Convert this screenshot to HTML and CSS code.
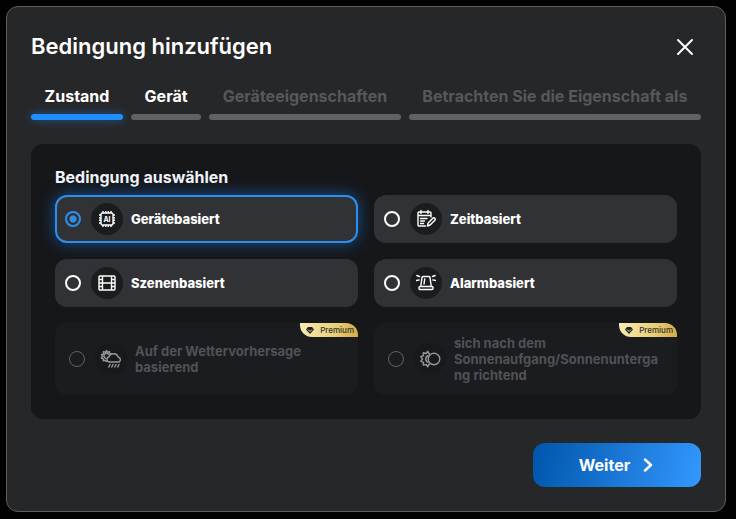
FILE: index.html
```html
<!DOCTYPE html>
<html lang="de">

<head>
    <meta charset="UTF-8">
    <meta name="viewport" content="width=device-width, initial-scale=1.0">
    <title>Bedingung hinzufügen</title>
    <link rel="stylesheet" href="styles.css">
</head>

<body>
    <form class="modal">
        <header class="modal-header">
            <h1>Bedingung hinzufügen</h1>
            <button type="button" class="close" aria-label="Schließen">
                <svg width="18" height="18" viewBox="0 0 18 18" fill="none" stroke="#fff" stroke-width="2" stroke-linecap="round">
                    <path d="M2 2l14 14M16 2L2 16" />
                </svg>
            </button>
        </header>

        <nav class="steps">
            <button type="button" class="step active">Zustand</button>
            <button type="button" class="step next">Gerät</button>
            <button type="button" class="step" disabled>Geräteeigenschaften</button>
            <button type="button" class="step" disabled>Betrachten Sie die Eigenschaft als</button>
        </nav>

        <fieldset class="panel">
            <legend>Bedingung auswählen</legend>
            <div class="options">
                <label class="option">
                    <input type="radio" name="condition" checked>
                    <span class="icon">
                        <svg width="20" height="20" viewBox="0 0 20 20" fill="none" stroke="#fff" stroke-width="1.4">
                            <rect x="4" y="4" width="12" height="12" rx="1.5" />
                            <path d="M6 4V2M8.700 4V2M11.300 4V2M14 4V2M6 18v-2M8.700 18v-2M11.300 18v-2M14 18v-2M4 6H2M4 8.700H2M4 11.300H2M4 14H2M18 6h-2M18 8.700h-2M18 11.300h-2M18 14h-2" />
                            <text class="chip-text" x="10" y="12.500" text-anchor="middle">AI</text>
                        </svg>
                    </span>
                    <span class="name">Gerätebasiert</span>
                </label>

                <label class="option">
                    <input type="radio" name="condition">
                    <span class="icon">
                        <svg width="20" height="20" viewBox="0 0 20 20" fill="none" stroke="#fff" stroke-width="1.400" stroke-linecap="round" stroke-linejoin="round">
                            <path d="M9.500 17H3a1 1 0 0 1-1-1V4a1 1 0 0 1 1-1h11a1 1 0 0 1 1 1v4M2 6.500H15M5 1.500v3M12 1.500v3M4.500 9.500h6.500M4.500 12h4M4.500 14.500h3" />
                            <path d="M11.500 17l.6-3 5-5a1.500 1.500 0 0 1 2 2l-5 5z" />
                        </svg>
                    </span>
                    <span class="name">Zeitbasiert</span>
                </label>

                <label class="option">
                    <input type="radio" name="condition">
                    <span class="icon">
                        <svg width="20" height="20" viewBox="0 0 20 20" fill="none" stroke="#fff" stroke-width="1.400">
                            <rect x="2" y="3" width="16" height="14" rx="1" />
                            <path d="M5.500 3v14M14.500 3v14M5.500 10h9M2 6.500h3.500M2 10h3.500M2 13.500h3.500M14.500 6.500H18M14.500 10H18M14.500 13.500H18" />
                        </svg>
                    </span>
                    <span class="name">Szenenbasiert</span>
                </label>

                <label class="option">
                    <input type="radio" name="condition">
                    <span class="icon">
                        <svg width="20" height="20" viewBox="0 0 20 20" fill="none" stroke="#fff" stroke-width="1.400" stroke-linecap="round" stroke-linejoin="round">
                            <path d="M4.800 13L6 4.700a1.200 1.200 0 0 1 1.200-1.200h5.600a1.200 1.200 0 0 1 1.200 1.200L15.200 13M8 11l.7-5" />
                            <rect x="3" y="13.500" width="14" height="3" rx="1" />
                            <path d="M.8 2.500l2.700 1M.5 7.500l2.700-.6M19.200 2.500l-2.700 1M19.500 7.500l-2.700-.6" />
                        </svg>
                    </span>
                    <span class="name">Alarmbasiert</span>
                </label>

                <label class="option locked">
                    <input type="radio" name="condition" disabled>
                    <span class="icon">
                        <svg width="22" height="20" viewBox="0 0 22 20" fill="none" stroke="#fff" stroke-width="1.400" stroke-linecap="round" stroke-linejoin="round">
                            <path d="M6.500 1.500l1 1.800 2-.8.2 2 1.800.7M6.500 1.500l-1 1.800-2-.7v2.200l-2 .8 1.200 1.700L1.300 9l2 .8v2l2-.5 1 1.200M5.800 9.300a2.500 2.500 0 1 1 2.800-3.800" />
                            <path d="M9.500 13a2.700 2.700 0 0 1-.5-5.300 5 5 0 0 1 9.300.6 2.500 2.500 0 0 1 .7 4.700z" />
                            <path d="M10 15.500l-1.200 2.500M13 15.500l-1.200 2.500M16 15.500l-1.200 2.500M19 15.500l-1.200 2.500" />
                        </svg>
                    </span>
                    <span class="name">Auf der Wettervorhersage basierend</span>
                    <span class="badge">
                        <svg width="8" height="7" viewBox="0 0 8 7" fill="#222">
                            <path d="M2 0h4l2 2.400L4 7 0 2.400z" />
                            <path d="M2 2.500l2 2 2-2" fill="none" stroke="#f3df98" />
                        </svg>
                        Premium
                    </span>
                </label>

                <label class="option locked">
                    <input type="radio" name="condition" disabled>
                    <span class="icon">
                        <svg width="22" height="20" viewBox="0 0 22 20" fill="none" stroke="#fff" stroke-width="1.400" stroke-linejoin="round">
                            <circle cx="15" cy="10" r="5.800" />
                            <path d="M11 4.500l-1.300.3L8.800 2.300 7 4.500l-2.700-.7.200 2.800-2.700 1L3.500 10l-1.700 2.300 2.700 1-.2 2.800 2.700-.6 1.800 2.200.9-2.400 1.300.2M9.500 6.500a3.600 3.600 0 0 0 0 7" />
                        </svg>
                    </span>
                    <span class="name">sich nach dem Sonnenaufgang/Sonnenuntergang richtend</span>
                    <span class="badge">
                        <svg width="8" height="7" viewBox="0 0 8 7" fill="#222">
                            <path d="M2 0h4l2 2.400L4 7 0 2.400z" />
                            <path d="M2 2.500l2 2 2-2" fill="none" stroke="#f3df98" />
                        </svg>
                        Premium
                    </span>
                </label>
            </div>
        </fieldset>

        <footer class="modal-footer">
            <button type="submit" class="submit">
                Weiter
                <svg width="12" height="14" viewBox="0 0 12 14" fill="none" stroke="#fff" stroke-width="2.400" stroke-linecap="round" stroke-linejoin="round">
                    <path d="M2 1.500L8 7l-6 5.500" />
                </svg>
            </button>
        </footer>
    </form>
</body>

</html>
```

FILE: styles.css
```css
* {
    box-sizing: border-box;
}

body {
    margin: 0;
    padding: 6px 10px 7px 6px;
    background: #020203;
    color: #fff;
    font-family: Inter, "Liberation Sans", sans-serif;
}

button {
    padding: 0;
    border: 0;
    background: none;
    color: inherit;
    font-family: inherit;
}

svg {
    display: block;
    flex: none;
}

.modal {
    padding: 24px;
    border: 1px solid #5d5e60;
    border-radius: 12px;
    background: #262729;
}

/* header */
.modal-header {
    display: flex;
    justify-content: space-between;
    height: 32px;
}

.modal-header h1 {
    margin: 0;
    font-size: 22px;
    font-weight: 600;
    line-height: 30px;
}

.close {
    display: flex;
    align-items: center;
    justify-content: center;
    width: 32px;
    height: 32px;
}

/* steps */
.steps {
    display: flex;
    gap: 8px;
    margin-top: 23px;
}

.step {
    flex: 1 1 auto;
    padding: 0 12px;
    color: #57585c;
    font-size: 16px;
    font-weight: 700;
    line-height: 20px;
    white-space: nowrap;
}

.step::after {
    content: "";
    display: block;
    height: 6px;
    margin: 8px -12px 0;
    border-radius: 3px;
    background: #606167;
}

.step.active,
.step.next {
    color: #fff;
}

.step.active::after {
    background: #1f8fff;
    box-shadow: 0 0 10px rgba(31, 143, 255, .5);
}

/* panel */
.panel {
    min-width: 0;
    margin: 24px 0 0;
    padding: 24px;
    border: 0;
    border-radius: 12px;
    background: #161719;
}

.panel legend {
    float: left;
    width: 100%;
    margin-bottom: 8px;
    padding: 0;
    color: #f1f4fa;
    font-size: 16px;
    font-weight: 700;
    line-height: 19px;
}

.options {
    clear: both;
    display: grid;
    grid-template-columns: 1fr 1fr;
    gap: 16px;
}

.option {
    position: relative;
    display: flex;
    align-items: center;
    gap: 8px;
    min-width: 0;
    min-height: 48px;
    padding: 6px 8px;
    border: 2px solid transparent;
    border-radius: 12px;
    background: #313235;
}

.option:has(input:checked) {
    border-color: #2f8eed;
    box-shadow: 0 0 16px rgba(20, 120, 230, .6);
}

.option input {
    appearance: none;
    flex: none;
    width: 16px;
    height: 16px;
    margin: 0 2px 0 0;
    border: 2px solid #fff;
    border-radius: 50%;
}

.option input:checked {
    border-color: #2f8eed;
    background: radial-gradient(circle, #2f8eed 3px, transparent 4px);
}

.icon {
    flex: none;
    display: flex;
    align-items: center;
    justify-content: center;
    width: 32px;
    height: 32px;
    border-radius: 50%;
    background: #1b1c1e;
}

.chip-text {
    fill: #fff;
    stroke: none;
    font-size: 7px;
    font-weight: 700;
}

.name {
    min-width: 0;
    font-size: 13px;
    font-weight: 800;
    line-height: 16px;
    overflow-wrap: anywhere;
}

/* premium only */
.option.locked {
    min-height: 72px;
    padding: 10px 16px 10px 12px;
    background: #1b1c1f;
}

.locked input {
    border: 1px solid #626366;
}

.locked .icon {
    background: #18191b;
}

.locked .icon svg {
    opacity: .55;
}

.locked .name {
    color: #505256;
    font-weight: 700;
}

.badge {
    position: absolute;
    top: -2px;
    right: -2px;
    display: flex;
    align-items: center;
    gap: 6px;
    height: 14px;
    padding: 0 4px 0 6px;
    border-radius: 0 12px 0 12px;
    background: linear-gradient(100deg, #f7edb4, #e9cf78 60%, #d5aa45);
    color: #33302a;
    font-size: 8px;
    font-weight: 500;
    line-height: 14px;
}

/* footer */
.modal-footer {
    display: flex;
    justify-content: flex-end;
    margin-top: 24px;
}

.submit {
    display: flex;
    align-items: center;
    justify-content: center;
    gap: 13px;
    min-width: 168px;
    height: 44px;
    padding: 0 24px;
    border-radius: 12px;
    background: linear-gradient(105deg, #0055aa, #3398ff);
    font-size: 16px;
    font-weight: 700;
}
```
